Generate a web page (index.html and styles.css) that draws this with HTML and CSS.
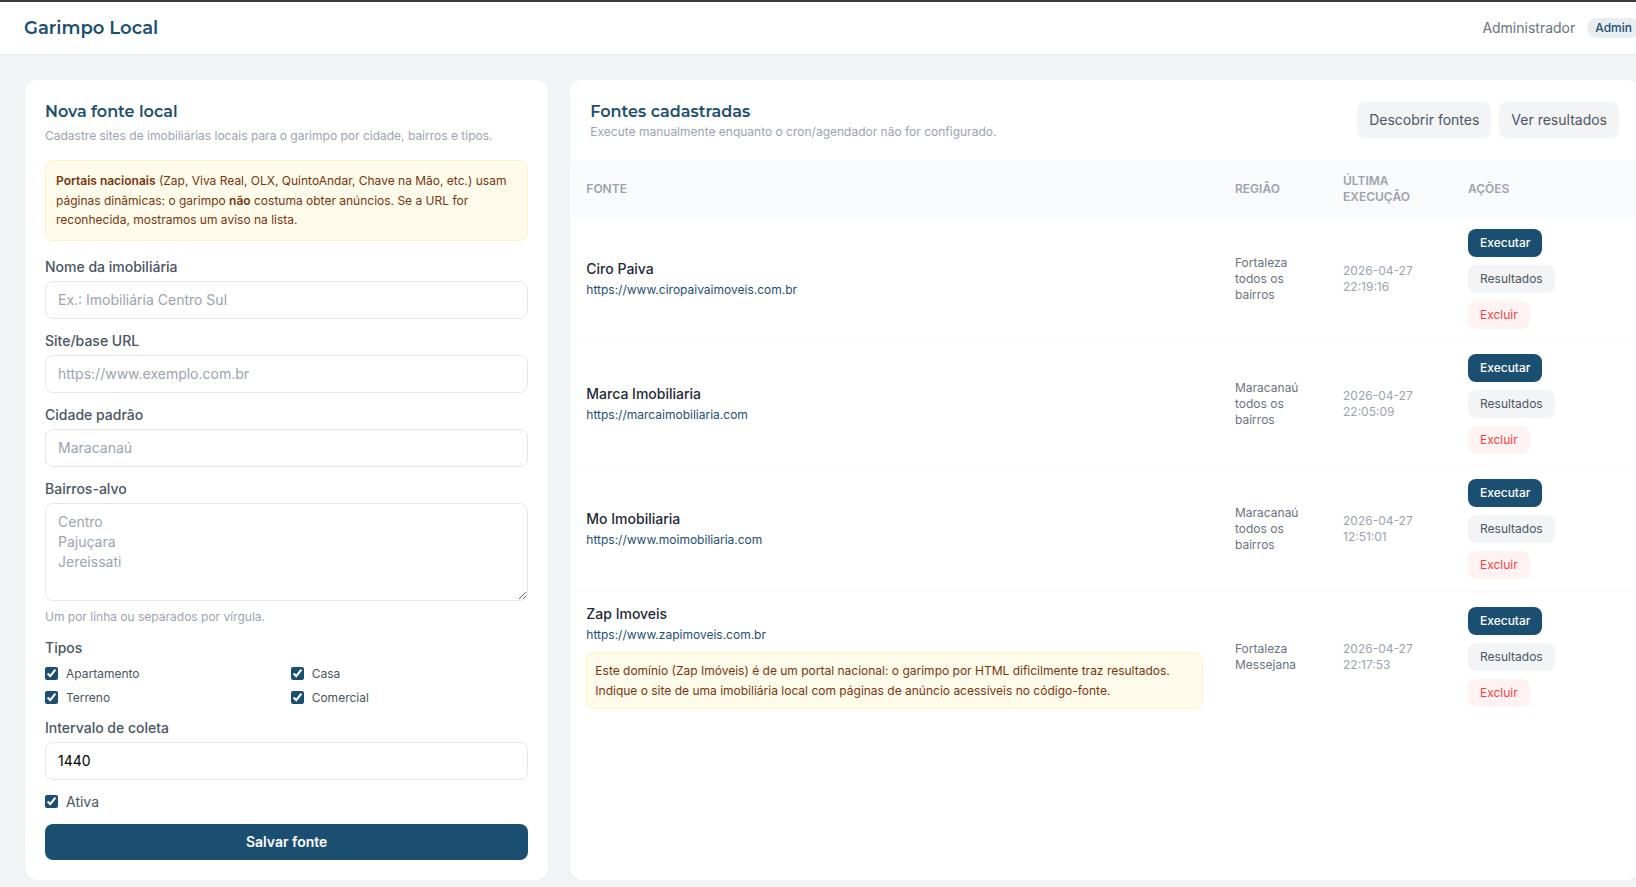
FILE: index.html
```html
<!DOCTYPE html>
<html lang="pt-BR">
<head>
<meta charset="utf-8">
<meta name="viewport" content="width=device-width, initial-scale=1">
<title>Garimpo Local</title>
<link rel="stylesheet" href="styles.css">
</head>
<body>
<header class="topbar">
  <h1 class="topbar-title">Garimpo Local</h1>
  <div class="topbar-user">
    <span class="user-name">Administrador</span>
    <span class="badge">Admin</span>
  </div>
</header>

<main class="layout">
  <section class="card form-card">
    <h2 class="card-title">Nova fonte local</h2>
    <p class="hint form-intro">Cadastre sites de imobiliárias locais para o garimpo por cidade, bairros e tipos.</p>
    <div class="notice"><strong>Portais nacionais</strong> (Zap, Viva Real, OLX, QuintoAndar, Chave na Mão, etc.) usam páginas dinâmicas: o garimpo <strong>não</strong> costuma obter anúncios. Se a URL for reconhecida, mostramos um aviso na lista.</div>

    <form class="form">
      <div class="field">
        <label class="label" for="nome">Nome da imobiliária</label>
        <input class="input" id="nome" type="text" placeholder="Ex.: Imobiliária Centro Sul">
      </div>
      <div class="field">
        <label class="label" for="url">Site/base URL</label>
        <input class="input" id="url" type="url" placeholder="https://www.exemplo.com.br">
      </div>
      <div class="field">
        <label class="label" for="cidade">Cidade padrão</label>
        <input class="input" id="cidade" type="text" placeholder="Maracanaú">
      </div>
      <div class="field">
        <label class="label" for="bairros">Bairros-alvo</label>
        <textarea class="input textarea" id="bairros" rows="4" placeholder="Centro
Pajuçara
Jereissati"></textarea>
        <p class="hint field-hint">Um por linha ou separados por vírgula.</p>
      </div>
      <fieldset class="types">
        <legend class="label types-legend">Tipos</legend>
        <div class="types-grid">
          <label class="check check-small"><input type="checkbox" checked>Apartamento</label>
          <label class="check check-small"><input type="checkbox" checked>Casa</label>
          <label class="check check-small"><input type="checkbox" checked>Terreno</label>
          <label class="check check-small"><input type="checkbox" checked>Comercial</label>
        </div>
      </fieldset>
      <div class="field">
        <label class="label" for="intervalo">Intervalo de coleta</label>
        <input class="input" id="intervalo" type="text" inputmode="numeric" value="1440">
      </div>
      <label class="check"><input type="checkbox" checked>Ativa</label>
      <button class="btn btn-primary btn-save" type="submit">Salvar fonte</button>
    </form>
  </section>

  <section class="card list-card">
    <div class="list-head">
      <div>
        <h2 class="card-title">Fontes cadastradas</h2>
        <p class="hint">Execute manualmente enquanto o cron/agendador não for configurado.</p>
      </div>
      <div class="list-links">
        <a class="btn btn-muted" href="#descobrir">Descobrir fontes</a>
        <a class="btn btn-muted" href="#resultados">Ver resultados</a>
      </div>
    </div>
    <table class="table">
      <thead>
        <tr>
          <th class="col-source" scope="col">Fonte</th>
          <th class="col-region" scope="col">Região</th>
          <th class="col-last" scope="col">Última execução</th>
          <th class="col-actions" scope="col">Ações</th>
        </tr>
      </thead>
      <tbody>
        <tr>
          <td><div class="source-name">Ciro Paiva</div><a class="source-url" href="https://www.ciropaivaimoveis.com.br">https://www.ciropaivaimoveis.com.br</a></td>
          <td class="region"><div>Fortaleza</div><div>todos os bairros</div></td>
          <td class="date">2026-04-27 22:19:16</td>
          <td><div class="actions"><button class="btn btn-small btn-primary" type="button">Executar</button><a class="btn btn-small btn-muted" href="#resultados">Resultados</a><button class="btn btn-small btn-danger" type="button">Excluir</button></div></td>
        </tr>
        <tr>
          <td><div class="source-name">Marca Imobiliaria</div><a class="source-url" href="https://marcaimobiliaria.com">https://marcaimobiliaria.com</a></td>
          <td class="region"><div>Maracanaú</div><div>todos os bairros</div></td>
          <td class="date">2026-04-27 22:05:09</td>
          <td><div class="actions"><button class="btn btn-small btn-primary" type="button">Executar</button><a class="btn btn-small btn-muted" href="#resultados">Resultados</a><button class="btn btn-small btn-danger" type="button">Excluir</button></div></td>
        </tr>
        <tr>
          <td><div class="source-name">Mo Imobiliaria</div><a class="source-url" href="https://www.moimobiliaria.com">https://www.moimobiliaria.com</a></td>
          <td class="region"><div>Maracanaú</div><div>todos os bairros</div></td>
          <td class="date">2026-04-27 12:51:01</td>
          <td><div class="actions"><button class="btn btn-small btn-primary" type="button">Executar</button><a class="btn btn-small btn-muted" href="#resultados">Resultados</a><button class="btn btn-small btn-danger" type="button">Excluir</button></div></td>
        </tr>
        <tr>
          <td><div class="source-name">Zap Imoveis</div><a class="source-url" href="https://www.zapimoveis.com.br">https://www.zapimoveis.com.br</a><div class="notice notice-row">Este domínio (Zap Imóveis) é de um portal nacional: o garimpo por HTML dificilmente traz resultados. Indique o site de uma imobiliária local com páginas de anúncio acessíveis no código-fonte.</div></td>
          <td class="region"><div>Fortaleza</div><div>Messejana</div></td>
          <td class="date">2026-04-27 22:17:53</td>
          <td><div class="actions"><button class="btn btn-small btn-primary" type="button">Executar</button><a class="btn btn-small btn-muted" href="#resultados">Resultados</a><button class="btn btn-small btn-danger" type="button">Excluir</button></div></td>
        </tr>
      </tbody>
    </table>
  </section>
</main>
</body>
</html>
```

FILE: styles.css
```css
:root {
  --primary: #1b4f72;
  --gray-50: #f9fafb;
  --gray-100: #f3f4f6;
  --gray-200: #e5e7eb;
  --gray-400: #9ca3af;
  --gray-500: #6b7280;
  --gray-600: #4b5563;
}

*, *::before, *::after { box-sizing: border-box; }

body {
  margin: 0;
  overflow-x: hidden;
  border-top: 2px solid #3c3c3c;
  background: var(--gray-100);
  color: #1f2937;
  font: 14px/20px Inter, "Liberation Sans", sans-serif;
}

h1, h2, p { margin: 0; }
a { text-decoration: none; }
button, input, textarea { font: inherit; }

/* Top bar */
.topbar {
  display: flex;
  align-items: center;
  justify-content: space-between;
  margin-right: -28px;
  padding: 12px 24px;
  background: #fff;
  border-bottom: 1px solid var(--gray-200);
}
.topbar-title {
  color: var(--primary);
  font: 600 18px/28px Montserrat, Inter, sans-serif;
}
.topbar-user { display: flex; align-items: center; gap: 12px; }
.user-name { color: var(--gray-500); }
.badge {
  padding: 2px 8px;
  border-radius: 10px;
  background: #e8edf1;
  color: var(--primary);
  font-size: 12px;
  line-height: 16px;
  font-weight: 500;
}

/* Layout */
.layout {
  display: grid;
  grid-template-columns: repeat(3, minmax(0, 1fr));
  gap: 22px;
  margin-right: -28px;
  padding: 25px 25px 0;
}
.list-card { grid-column: span 2; }
.card {
  background: #fff;
  border-radius: 12px;
  box-shadow: 0 1px 2px rgba(0, 0, 0, .05);
}
.card-title {
  color: var(--primary);
  font: 600 16px/24px Montserrat, Inter, sans-serif;
}
.hint { color: var(--gray-400); font-size: 12px; line-height: 16px; }
.notice {
  padding: 10px;
  border: 1px solid #fef3c7;
  border-radius: 8px;
  background: #fffbeb;
  color: #78350f;
  font-size: 12px;
  line-height: 1.625;
}
.notice strong { font-weight: 600; }

/* Form */
.form-card { padding: 20px; }
.form-intro { margin: 4px 0 16px; }
.form { display: flex; flex-direction: column; gap: 12px; margin-top: 16px; }
.field { display: flex; flex-direction: column; }
.label { margin-bottom: 4px; color: var(--gray-600); font-weight: 500; }
.input {
  width: 100%;
  padding: 8px 12px;
  border: 1px solid var(--gray-200);
  border-radius: 8px;
  background: #fff;
  color: #000;
}
.input::placeholder { color: var(--gray-400); opacity: 1; }
.textarea { display: block; resize: vertical; }
.field-hint { margin: 8px 0 1px; }
.types { margin: 0; padding: 0; border: 0; }
.types-legend { margin-bottom: 8px; padding: 0; }
.types-grid { display: grid; grid-template-columns: 1fr 1fr; gap: 8px; }
.check { display: flex; align-items: center; gap: 8px; color: var(--gray-600); }
.check input { width: 13px; height: 13px; margin: 0; accent-color: var(--primary); }
.check-small { font-size: 12px; line-height: 16px; }

/* Buttons */
.btn {
  display: inline-block;
  padding: 8px 12px;
  border: 0;
  border-radius: 8px;
  line-height: 20px;
  text-align: center;
}
.btn-primary { background: var(--primary); color: #fff; font-weight: 500; }
.btn-muted { background: var(--gray-100); color: var(--gray-600); }
.btn-danger { background: #fef2f2; color: #ef4444; }
.btn-save { font-weight: 600; }
.btn-small { padding: 6px 12px; font-size: 12px; line-height: 16px; }

/* Source list */
.list-head {
  display: flex;
  align-items: center;
  justify-content: space-between;
  padding: 20px;
  border-bottom: 1px solid var(--gray-100);
}
.list-links { display: flex; gap: 8px; }
.table { width: 100%; table-layout: fixed; border-collapse: separate; border-spacing: 0; }
.table th {
  padding: 12px 16px;
  background: var(--gray-50);
  color: var(--gray-400);
  font-size: 12px;
  line-height: 16px;
  font-weight: 600;
  text-align: left;
  text-transform: uppercase;
}
.table td { padding: 12px 16px; vertical-align: middle; }
.table tbody tr + tr td { border-top: 1px solid var(--gray-50); }
.table .col-region { width: 108px; }
.table .col-last { width: 125px; }
.table .col-actions { width: 187px; }
.source-name { font-weight: 500; }
.source-url { color: var(--primary); font-size: 12px; }
.notice-row { margin-top: 7px; padding: 8px; }
.region { color: var(--gray-500); font-size: 12px; line-height: 16px; }
.date { color: var(--gray-400); font-size: 12px; line-height: 16px; }
.actions { display: flex; flex-direction: column; align-items: flex-start; gap: 8px; }
```
